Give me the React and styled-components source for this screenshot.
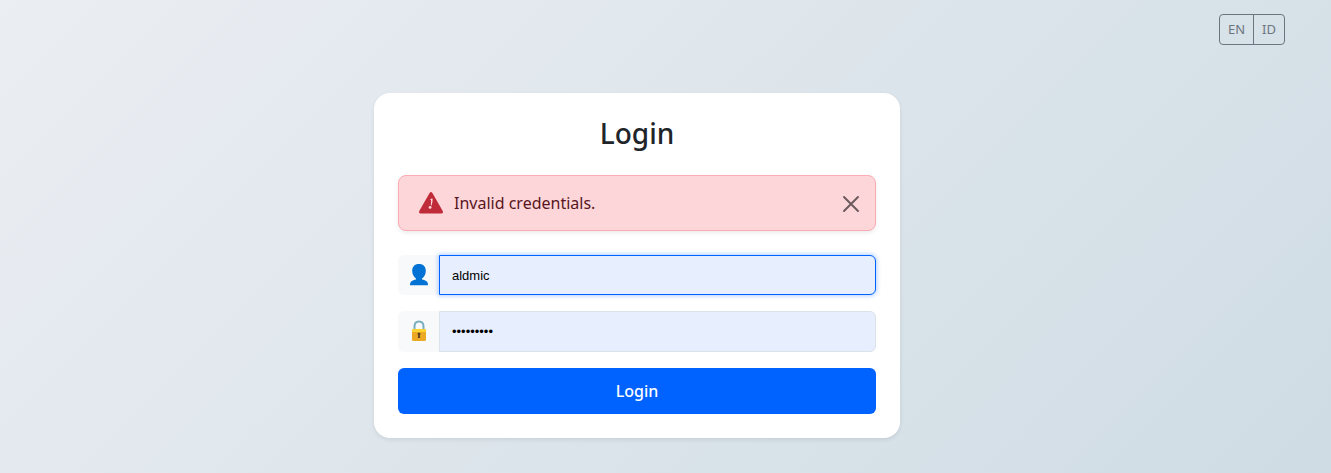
import { useState } from "react";
import styled, { createGlobalStyle, css } from "styled-components";

const GlobalStyle = createGlobalStyle`
  * {
    box-sizing: border-box;
  }
  body {
    margin: 0;
    font-family: "Noto Sans", "Open Sans", sans-serif;
    font-size: 16px;
    line-height: 24px;
    color: #212529;
  }
`;

const Page = styled.div`
  min-height: 100vh;
  display: flex;
  flex-direction: column;
  background: linear-gradient(135deg, #ebeef3 0%, #cfdce4 100%);
`;

const TopBar = styled.header`
  display: flex;
  justify-content: flex-end;
  padding: 14px 46px 0 16px;
`;

const LangGroup = styled.div`
  display: flex;
  border: 1px solid #6c757d;
  border-radius: 4px;
`;

const LangButton = styled.button`
  padding: 4px 8px;
  border: none;
  background: transparent;
  color: #6c757d;
  font-family: inherit;
  font-size: 13px;
  line-height: 21px;
  cursor: pointer;

  & + & {
    border-left: 1px solid #6c757d;
  }
`;

const Main = styled.main`
  display: flex;
  justify-content: center;
  padding: 48px 57px 35px 0;
`;

const Card = styled.section`
  width: 100%;
  max-width: 526px;
  padding: 24px;
  background-color: #fff;
  border-radius: 16px;
  box-shadow: 0 2px 4px rgba(0, 0, 0, 0.08);
`;

const Title = styled.h1`
  margin: 0 0 26px;
  font-size: 28px;
  font-weight: 500;
  line-height: 32px;
  text-align: center;
`;

const Alert = styled.div`
  display: flex;
  align-items: center;
  margin-bottom: 24px;
  padding: 15px;
  padding-left: 20px;
  background-color: #fdd6da;
  border: 1px solid #fbabb4;
  border-radius: 8px;
  box-shadow: 0 2px 4px rgba(0, 0, 0, 0.08);
  color: #58151c;
`;

const AlertText = styled.span`
  flex: 1;
  margin-left: 11px;
`;

const CloseButton = styled.button`
  display: flex;
  padding: 2px 0 0;
  border: none;
  background: transparent;
  color: #6c5b5c;
  cursor: pointer;
`;

const Form = styled.form`
  display: flex;
  flex-direction: column;
  gap: 16px;
`;

const InputGroup = styled.div`
  display: flex;
`;

const InputIcon = styled.label`
  width: 41px;
  padding: 8px 0;
  display: flex;
  justify-content: center;
  align-items: center;
  background-color: #f8f9fa;
  border-radius: 6px 0 0 6px;
`;

const Input = styled.input`
  flex: 1;
  min-width: 0;
  min-height: 40px;
  padding: 0 12px;
  background-color: #e7eefd;
  border: 1px solid #dce2ea;
  border-radius: 0 6px 6px 0;
  outline: none;
  color: #000;
  font-family: "Liberation Sans", Arial, sans-serif;
  font-size: 13px;
  ${(props) =>
    props.$active &&
    css`
      border-color: #0062ff;
      box-shadow: 0 0 4px 1px rgba(0, 98, 255, 0.3);
    `}
`;

const Submit = styled.button`
  padding: 11px 16px;
  border: none;
  border-radius: 6px;
  background-color: #0062ff;
  color: #fff;
  font-family: inherit;
  font-size: 16px;
  font-weight: 500;
  line-height: 24px;
  cursor: pointer;
`;

const WarningIcon = () => (
  <svg width="24" height="22" viewBox="0 0 24 22" aria-hidden="true">
    <path
      d="M10.6 1Q12 -1 13.4 1L23.6 18.8Q24.6 21.6 22 21.6H2Q-0.6 21.6 0.4 18.8Z"
      fill="#c02b3a"
    />
    <path
      d="M11 7.4Q12.4 6.2 13.6 6.6Q13.8 10 12.6 13.4H11.7Q12.4 10 12 8Z"
      fill="#fdd6da"
    />
    <circle cx="11.1" cy="15.4" r="1.4" fill="#fdd6da" />
  </svg>
);

const CloseIcon = () => (
  <svg width="18" height="18" viewBox="0 0 18 18" aria-hidden="true">
    <path
      d="M2 2L16 16M16 2L2 16"
      stroke="currentColor"
      strokeWidth="2"
      strokeLinecap="round"
    />
  </svg>
);

const UserIcon = () => (
  <svg width="20" height="22" viewBox="0 0 20 22" aria-hidden="true">
    <path
      d="M10 0C5.5 0 3.2 2.7 3.2 7C3.2 10.5 5 13.2 7 14.5V15.5C3 16.3 1 17.5 1 21.2H19C19 17.5 17 16.3 13 15.5V14.5C15 13.2 16.8 10.5 16.8 7C16.8 2.7 14.5 0 10 0Z"
      fill="#0272d4"
    />
  </svg>
);

const LockIcon = () => (
  <svg width="20" height="25" viewBox="0 0 20 25" aria-hidden="true">
    <path
      d="M5.5 11V7.5C5.5 4.5 7.2 2.5 10 2.5S14.5 4.5 14.5 7.5V11"
      fill="none"
      stroke="#78aebe"
      strokeWidth="2"
    />
    <rect x="3" y="10" width="14" height="12" rx="1.5" fill="#eba924" />
    <path d="M3 13V11.5Q3 10 4.5 10H15.5Q17 10 17 11.5V13Z" fill="#fdd32f" />
    <circle cx="10" cy="15" r="1.5" fill="#5f4325" />
    <path d="M9.4 15H10.6L11.2 19H8.8Z" fill="#5f4325" />
  </svg>
);

const App = () => {
  const [username, setUsername] = useState("aldmic");
  const [password, setPassword] = useState("123abc123");
  const [showError, setShowError] = useState(true);

  const handleSubmit = (e) => {
    e.preventDefault();
    setShowError(true);
  };

  return (
    <>
      <GlobalStyle />
      <Page>
        <TopBar>
          <LangGroup>
            <LangButton type="button">EN</LangButton>
            <LangButton type="button">ID</LangButton>
          </LangGroup>
        </TopBar>
        <Main>
          <Card>
            <Title>Login</Title>
            {showError && (
              <Alert role="alert">
                <WarningIcon />
                <AlertText>Invalid credentials.</AlertText>
                <CloseButton
                  type="button"
                  aria-label="Close"
                  onClick={() => setShowError(false)}
                >
                  <CloseIcon />
                </CloseButton>
              </Alert>
            )}
            <Form onSubmit={handleSubmit}>
              <InputGroup>
                <InputIcon htmlFor="username" aria-label="Username">
                  <UserIcon />
                </InputIcon>
                <Input
                  id="username"
                  value={username}
                  onChange={(e) => setUsername(e.target.value)}
                  $active
                />
              </InputGroup>
              <InputGroup>
                <InputIcon htmlFor="password" aria-label="Password">
                  <LockIcon />
                </InputIcon>
                <Input
                  id="password"
                  type="password"
                  value={password}
                  onChange={(e) => setPassword(e.target.value)}
                />
              </InputGroup>
              <Submit type="submit">Login</Submit>
            </Form>
          </Card>
        </Main>
      </Page>
    </>
  );
};

export default App;
